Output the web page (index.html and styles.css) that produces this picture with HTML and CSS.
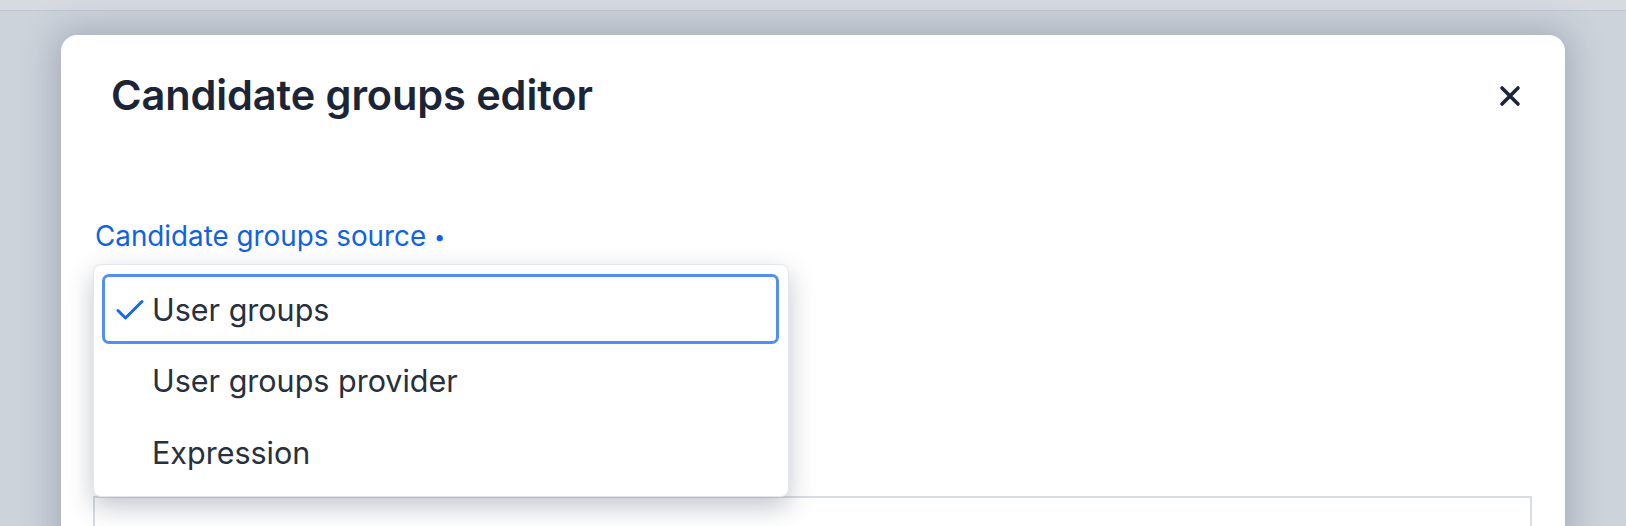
FILE: index.html
```html
<!DOCTYPE html>
<html lang="en">
<head>
<meta charset="utf-8">
<title>Candidate groups editor</title>
<link rel="stylesheet" href="styles.css">
</head>
<body>
<div class="topbar"></div>
<div class="backdrop">
  <div class="modal">
    <header class="modal-head">
      <h1 class="modal-title">Candidate groups editor</h1>
      <button class="close-btn" aria-label="Close">
        <svg width="24" height="24" viewBox="0 0 24 24"><path d="M4 4 L20 20 M20 4 L4 20" stroke="#1b2537" stroke-width="3.6" stroke-linecap="round" fill="none"/></svg>
      </button>
    </header>
    <div class="modal-body">
      <div class="field">
        <div class="field-label">Candidate groups source <span class="req">•</span></div>
        <div class="select-wrap">
          <ul class="menu">
            <li class="option selected">
              <svg class="check" width="28" height="22" viewBox="0 0 28 22"><path d="M2 11.5 L9.5 19 L26 2.5" stroke="#1769e6" stroke-width="3" stroke-linecap="round" stroke-linejoin="round" fill="none"/></svg>
              <span>User groups</span>
            </li>
            <li class="option"><span>User groups provider</span></li>
            <li class="option"><span>Expression</span></li>
          </ul>
        </div>
      </div>
      <div class="editor-box"></div>
    </div>
  </div>
</div>
</body>
</html>
```
FILE: styles.css
```css
* { box-sizing: border-box; }
html, body { margin: 0; padding: 0; }
body {
  width: 1626px;
  height: 526px;
  overflow: hidden;
  background: #cdd3db;
  font-family: Inter, "Noto Sans", sans-serif;
}
.topbar {
  height: 11px;
  background: #d6dbe2;
  border-bottom: 1px solid #bfc6cf;
}
.backdrop {
  padding: 24px 61px 0 61px;
}
.modal {
  background: #ffffff;
  border-radius: 16px;
  height: 600px;
  box-shadow: 0 0 34px 6px rgba(60, 75, 100, 0.28);
}
.modal-head {
  display: flex;
  justify-content: space-between;
  align-items: flex-start;
  padding: 36px 43px 0 50px;
  height: 121px;
}
.modal-title {
  margin: 0;
  font-size: 41.5px;
  line-height: 48px;
  font-weight: 600;
  color: #1b2537;
  letter-spacing: -0.1px;
}
.close-btn {
  border: 0;
  background: none;
  padding: 0;
  margin-top: 13px;
  width: 24px;
  height: 24px;
  cursor: pointer;
}
.close-btn svg { display: block; }
.modal-body {
  padding: 0 33px 0 32px;
}
.field-label {
  margin: 63px 0 0 2px;
  font-size: 27.8px;
  line-height: 34px;
  color: #0f63df;
}
.req {
  font-size: 20px;
  vertical-align: 2px;
}
.select-wrap {
  position: relative;
  margin-top: 10px;
  height: 56px;
}
.menu {
  position: absolute;
  top: 0;
  left: 0;
  width: 696px;
  margin: 0;
  padding: 9px 9px 8px 8px;
  list-style: none;
  background: #ffffff;
  border: 1px solid #e3e6ea;
  border-radius: 8px;
  box-shadow: 0 10px 26px rgba(40, 52, 75, 0.28);
  z-index: 2;
}
.option {
  position: relative;
  height: 72px;
  display: flex;
  align-items: center;
  padding-left: 47px;
  font-size: 30.5px;
  color: #27303f;
  border: 3px solid transparent;
  border-radius: 7px;
}
.option.selected {
  border-color: #528ff4;
  height: 70px;
}
.check {
  position: absolute;
  left: 11px;
  top: 22px;
}
.editor-box {
  margin-top: 176px;
  height: 200px;
  border: 2px solid #d8dde3;
}
```
